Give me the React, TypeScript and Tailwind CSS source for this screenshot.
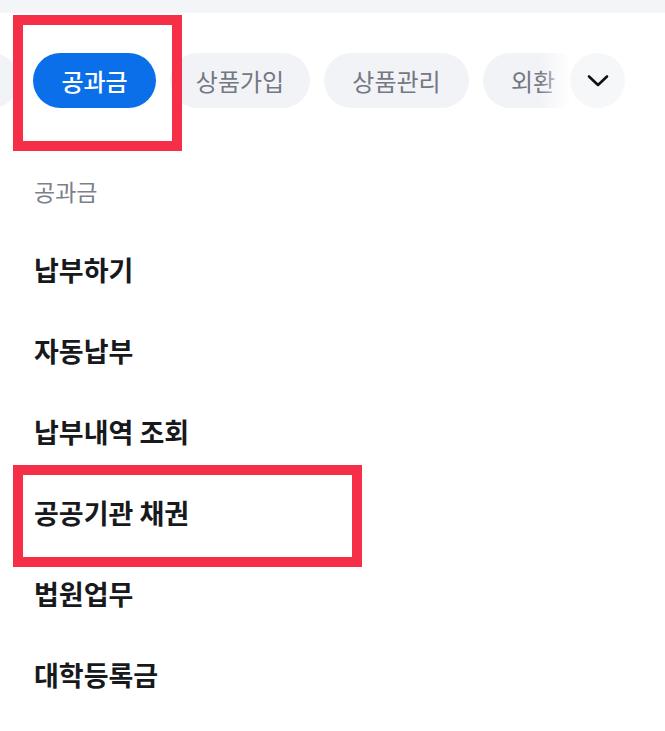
import React from "react";

const items = ["납부하기", "자동납부", "납부내역 조회", "공공기관 채권", "법원업무", "대학등록금"];

export default function App() {
  return (
    <div
      className="relative w-[665px] h-[731px] bg-white overflow-hidden"
      style={{ fontFamily: '"Noto Sans CJK KR", "Noto Sans", sans-serif' }}
    >
      <div className="h-[13px] bg-[#f4f5f9]" />

      {/* pill row */}
      <div className="relative mt-[40px] h-[55px]">
        <div className="flex gap-[14px] -ml-[101px] h-[55px]">
          <div className="shrink-0 w-[120px] h-[55px] rounded-full bg-[#f2f3f7]" />
          <div className="shrink-0 h-[55px] w-[123px] rounded-full bg-[#0a6fe8] text-white text-[24px] font-medium flex items-center justify-center">
            공과금
          </div>
          <div className="shrink-0 h-[55px] w-[140px] rounded-full bg-[#f2f3f7] text-[#737882] text-[24px] flex items-center justify-center">
            상품가입
          </div>
          <div className="shrink-0 h-[55px] w-[145px] rounded-full bg-[#f2f3f7] text-[#737882] text-[24px] flex items-center justify-center">
            상품관리
          </div>
          <div className="shrink-0 h-[55px] w-[100px] rounded-full bg-[#f2f3f7] text-[#737882] text-[24px] flex items-center pl-[28px]">
            외환
          </div>
        </div>
        <div className="absolute top-0 bottom-0 left-[540px] right-0 flex">
          <div className="w-[30px] h-full bg-gradient-to-r from-white/0 to-white" />
          <div className="flex-1 h-full bg-white">
            <div className="w-[55px] h-[55px] rounded-full bg-[#f6f7f9] flex items-center justify-center">
              <svg width="22" height="14" viewBox="0 0 22 14" fill="none">
                <path d="M2 2.5 L11 11 L20 2.5" stroke="#111" strokeWidth="2.6" strokeLinecap="round" strokeLinejoin="round" />
              </svg>
            </div>
          </div>
        </div>
      </div>

      {/* section */}
      <div className="pl-[34px]">
        <div className="mt-[71px] text-[23px] leading-[24px] text-[#7b808a]">공과금</div>
        <div className="mt-[27px] flex flex-col">
          {items.map((t) => (
            <div key={t} className="h-[81px] flex items-center text-[27px] font-bold text-[#17191c]">
              {t}
            </div>
          ))}
        </div>
      </div>

      {/* annotation boxes */}
      <div className="absolute left-[13px] top-[15px] w-[169px] h-[136px] border-[10px] border-[#f52f48]" />
      <div className="absolute left-[13px] top-[465px] w-[349px] h-[102px] border-[10px] border-[#f52f48]" />
    </div>
  );
}
